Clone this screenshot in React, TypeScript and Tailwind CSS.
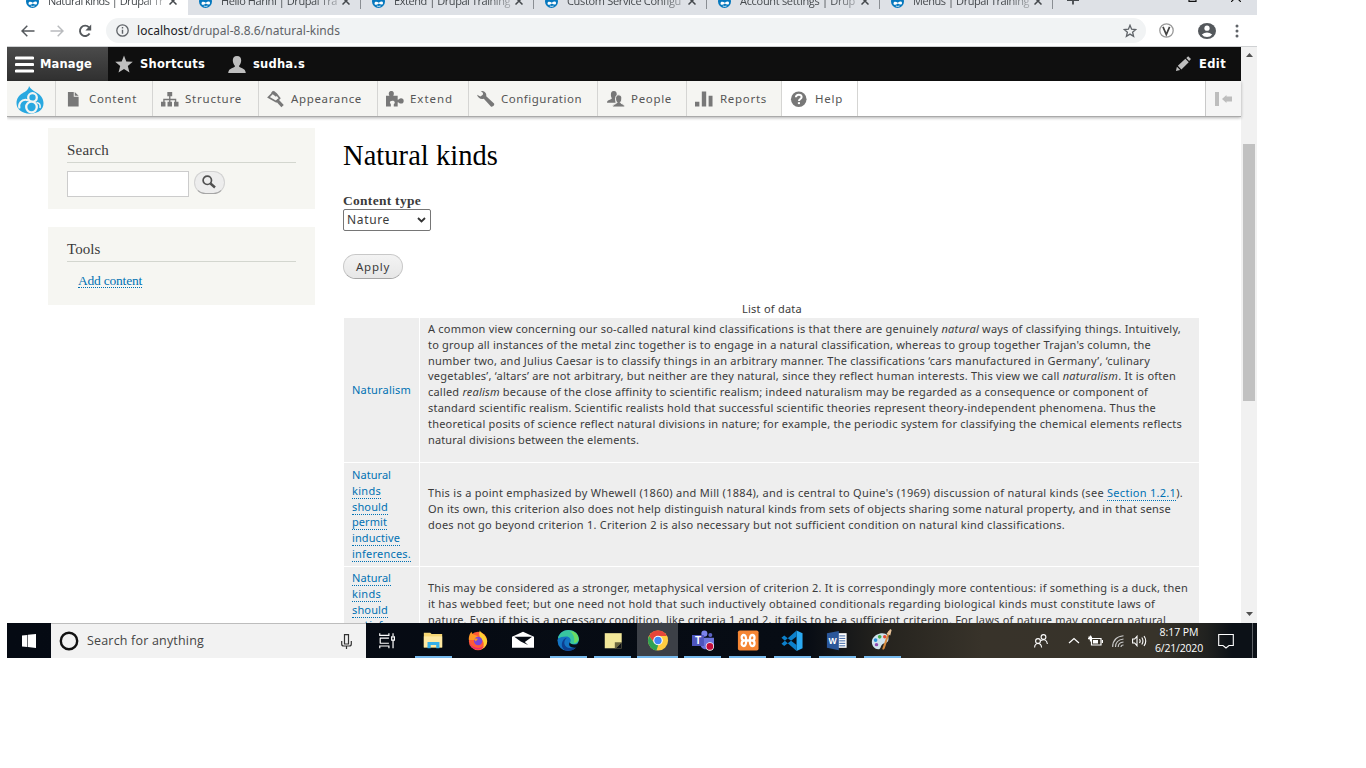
import { useLayoutEffect, useRef, type ReactNode } from "react";

/* Inline text tracked so that it occupies exactly `w` pixels. */
function Fit({ w, className = "", children }: { w: number; className?: string; children: ReactNode }) {
  const ref = useRef<HTMLSpanElement>(null);
  useLayoutEffect(() => {
    const el = ref.current;
    if (!el) return;
    el.style.letterSpacing = "0px";
    const count = (el.textContent || "").length || 1;
    const natural = el.getBoundingClientRect().width;
    el.style.letterSpacing = `${(w - natural) / count}px`;
  }, [w]);
  return (
    <span ref={ref} className={`inline-block whitespace-nowrap ${className}`}>
      {children}
    </span>
  );
}

const Favicon = () => (
  <svg viewBox="0 0 13 15" className="h-[15px] w-[13px] shrink-0">
    <path d="M6.5 0C8 2 13 4 13 8.5A6.5 6.5 0 0 1 0 8.5C0 4 5 2 6.5 0Z" fill="#0678be" />
    <path d="M2.500 10.500C2.500 8 5 8.300 6.800 9.700 9 8 11 8 11 10c0 2-2 2-4.200.500C5 12 2.500 12.500 2.500 10.500z" fill="#fff" />
    <path d="M4.800 13q1.900.900 3.800 0" stroke="#fff" strokeWidth=".8" fill="none" />
  </svg>
);

const tabs = [
  { t: "Natural kinds | Drupal Tr", w: 115 },
  { t: "Hello Harini | Drupal Tra", w: 116 },
  { t: "Extend | Drupal Training", w: 116 },
  { t: "Custom Service Configu", w: 114 },
  { t: "Account settings | Drup", w: 115 },
  { t: "Menus | Drupal Training", w: 116 },
];

function TabStrip() {
  return (
    <div className="flex h-[15px] shrink-0 overflow-hidden bg-[#dee1e6] font-['Open_Sans',sans-serif] text-[11px] text-[#45494d]">
      {tabs.map((tab, i) => (
        <div
          key={tab.t}
          className={
            i === 0
              ? "flex h-[15px] w-[181px] shrink-0 items-start rounded-tl-none bg-white pl-[19px]"
              : "flex h-[9px] w-[173px] shrink-0 items-start border-r border-[#8a8e93] pl-[11px]"
          }
        >
          <span className="-mt-[8px] flex items-center">
            <Favicon />
            <span className="ml-[9px] mt-px w-[117px] overflow-hidden leading-[15px] [mask-image:linear-gradient(90deg,#000_80%,#0005)]">
              <Fit w={tab.w}>{tab.t}</Fit>
            </span>
            <svg viewBox="0 0 8 8" className="ml-[4px] mt-[1px] h-[8px] w-[8px]">
              <path d="M.5.5l7 7M7.5.5l-7 7" stroke="#45494d" strokeWidth="1.5" />
            </svg>
          </span>
        </div>
      ))}
      <svg viewBox="0 0 12 12" className="-mt-[7px] ml-[14px] h-[12px] w-[12px]">
        <path d="M6 0v11.5M0 7h12" stroke="#45494d" strokeWidth="1.8" />
      </svg>
      <svg viewBox="0 0 9 9" className="-mt-[7px] ml-[109px] h-[9px] w-[9px]">
        <path d="M1 0v8.3h7V0" fill="none" stroke="#111" strokeWidth="1.2" />
      </svg>
      <svg viewBox="0 0 10 10" className="-mt-[8px] ml-[34px] h-[10px] w-[10px]">
        <path d="M0 0l10 10M10 0L0 10" stroke="#111" strokeWidth="1.2" />
      </svg>
    </div>
  );
}

function AddressBar() {
  return (
    <div className="flex h-[32px] shrink-0 items-center border-b border-[#cfd1d3] bg-white">
      <svg viewBox="0 0 14 12" className="ml-[14px] h-[12px] w-[14px]">
        <path d="M13.5 6H1.2M6.3.8L1 6l5.3 5.2" fill="none" stroke="#54585c" strokeWidth="1.5" />
      </svg>
      <svg viewBox="0 0 14 12" className="ml-[15px] h-[12px] w-[14px]">
        <path d="M.5 6h12.3M7.7.8L13 6l-5.3 5.2" fill="none" stroke="#b9bbbe" strokeWidth="1.5" />
      </svg>
      <svg viewBox="0 0 14 14" className="ml-[14px] h-[14px] w-[14px]">
        <path d="M11.6 9.6A5.2 5.2 0 1 1 11 3.3" fill="none" stroke="#54585c" strokeWidth="1.9" />
        <path d="M13.2.6v5.8H7.4z" fill="#54585c" />
      </svg>
      <div className="ml-[14px] flex h-[25px] w-[1040px] items-center rounded-full bg-[#f1f3f4] pl-[10px]">
        <svg viewBox="0 0 13 13" className="h-[13px] w-[13px]">
          <circle cx="6.5" cy="6.5" r="5.7" fill="none" stroke="#5f6368" strokeWidth="1.3" />
          <path d="M6.5 5.8v4M6.5 3v1.5" stroke="#5f6368" strokeWidth="1.4" />
        </svg>
        <span className="ml-[8px] font-['Noto_Sans',sans-serif] text-[12px] leading-[16px] text-[#5f6368]">
          <Fit w={203}>
            <span className="text-[#202124]">localhost</span>/drupal-8.8.6/natural-kinds
          </Fit>
        </span>
        <svg viewBox="0 0 14 14" className="ml-auto mr-[9px] h-[14px] w-[14px]">
          <path d="M7 1.3l1.6 3.9 4.2.3-3.2 2.7 1 4.1L7 10.1l-3.6 2.2 1-4.1L1.2 5.5l4.2-.3z" fill="none" stroke="#5f6368" strokeWidth="1.3" />
        </svg>
      </div>
      <svg viewBox="0 0 15 15" className="ml-[13px] h-[15px] w-[15px]">
        <circle cx="7.5" cy="7.5" r="6.7" fill="#fff" stroke="#999" strokeWidth="1.3" />
        <path d="M4 3.8l3.3 7.7L10.6 3.8" fill="none" stroke="#444" strokeWidth="1.7" />
      </svg>
      <svg viewBox="0 0 18 16" className="ml-[24px] h-[16px] w-[18px]">
        <ellipse cx="9" cy="8" rx="9" ry="8" fill="#54585c" />
        <circle cx="9" cy="5.2" r="2.6" fill="#fff" />
        <path d="M3.8 11.4Q9 7.4 14.2 11.4 12.4 14 9 14T3.8 11.4z" fill="#fff" />
      </svg>
      <svg viewBox="0 0 4 14" className="ml-[19px] h-[14px] w-[4px]">
        <circle cx="2" cy="2" r="1.5" fill="#5f6368" />
        <circle cx="2" cy="7" r="1.5" fill="#5f6368" />
        <circle cx="2" cy="12" r="1.5" fill="#5f6368" />
      </svg>
    </div>
  );
}

function AdminBar() {
  return (
    <div className="flex h-[34px] shrink-0 items-center bg-[#0f0f0f] font-['DejaVu_Sans',sans-serif] text-[11.500px] font-bold text-white">
      <div className="flex h-full w-[101px] items-center bg-linear-to-b from-[#4b4b4b] to-[#303030] pl-[8px]">
        <svg viewBox="0 0 19 17" className="h-[17px] w-[19px]">
          <path d="M1.3 2h16.4M1.3 8.5h16.4M1.3 15h16.4" stroke="#fff" strokeWidth="3" strokeLinecap="round" />
        </svg>
        <Fit w={52} className="ml-[6px] mt-px">Manage</Fit>
      </div>
      <svg viewBox="0 0 18 17" className="ml-[7px] h-[18px] w-[18px]">
        <path d="M9 0l2.3 5.9 6.5.4-5 4.2 1.7 6.5L9 13.4 3.5 17l1.7-6.5-5-4.2 6.5-.4z" fill="#bebebe" />
      </svg>
      <Fit w={65} className="ml-[7px] mt-px">Shortcuts</Fit>
      <svg viewBox="0 0 18 17" className="ml-[23px] h-[17px] w-[18px]">
        <path d="M9 0c3 0 4.3 1.900 4.200 4.600-.1 2.500-1.200 4.600-2.200 5.400 0 2 6.500 1.500 6.800 7H.2c.3-5.500 6.800-5 6.800-7-1-.8-2.100-2.900-2.200-5.400C4.700 1.900 6 0 9 0z" fill="#bebebe" />
      </svg>
      <Fit w={52} className="ml-[7px] mt-px">sudha.s</Fit>
      <svg viewBox="0 0 17 17" className="ml-auto h-[16px] w-[16px]">
        <path d="M1 16l1-4.500 3.500 3.500zM3 10.300L11 3l3.600 3.600L6.800 14.300zM12 2l2-1.800 3 3-2 2z" fill="#bebebe" />
      </svg>
      <Fit w={27} className="ml-[8px] mr-[15px] mt-px">Edit</Fit>
    </div>
  );
}

const g = "#787878";
const menu = [
  { label: "Content", cell: "w-[97px] pl-[9px]", tw: 48, gap: "ml-[6px]", icon: <path d="M3 2h6v5h5v10H3zM10 2l4 4h-4z" fill={g} /> },
  {
    label: "Structure", cell: "w-[106px] pl-[8px]", tw: 57, gap: "ml-[6px]",
    icon: <path d="M6.500 2h5v4.500h-1.800V9h6v3.200H18V17h-4.600v-4.800h.9v-1.700H9.700v1.700h1.600V17H6.700v-4.800h1.600v-1.700H3.700v1.700h.9V17H0v-4.800h2.300V9h6V6.500H6.500z" fill={g} />,
  },
  {
    label: "Appearance", cell: "w-[119px] pl-[8px]", tw: 71, gap: "ml-[6px]",
    icon: (
      <g fill="none" stroke={g}>
        <path d="M1.500 7.500L7 2l2.500 2 3.500 4.500-3.500 3.500z" strokeWidth="1.700" />
        <path d="M5 2l5 4" strokeWidth="2.500" />
        <path d="M10 10l6 6.500" strokeWidth="3.300" />
      </g>
    ),
  },
  {
    label: "Extend", cell: "w-[91px] pl-[8px]", tw: 43, gap: "ml-[6px]",
    icon: <path d="M0 6h3.500C2 3 3.500 1 5.500 1s3.500 2 2 5H12v4c1.500 0 1.500-1.500 3.500-1.500 1.700 0 2.700 1.200 2.700 2.700s-1 2.800-2.700 2.800c-2 0-2-1.500-3.500-1.500V17H8v-2c0-1 1-1 1-2.200S8 11 6.500 11 4 11.800 4 12.800 5 14 5 15v2H0z" fill={g} />,
  },
  {
    label: "Configuration", cell: "w-[129px] pl-[8px]", tw: 81, gap: "ml-[6px]",
    icon: <path d="M4 1c4 0 6 2 5.500 5.500l8 7.500c1 1.500-1.500 4-3.200 3L7 9C4 10 1 8.500 0 5l3.500 1.800L6 5 6.200 3z" fill={g} />,
  },
  {
    label: "People", cell: "w-[89px] pl-[9px]", tw: 41, gap: "ml-[6px]",
    icon: (
      <g>
        <path d="M7 1c2.300 0 3.200 1.600 3 4-.1 1.800-.8 3-1.500 3.700l.3 4.300H0c.2-3.500 4.500-2.500 5-4.500C4.300 7.600 4 6.500 4 5c0-2.400.7-4 3-4z" fill={g} />
        <path d="M12 5c2.400 0 3.400 1.700 3.200 4.200-.1 1.800-.7 2.800-1.500 3.500 0 1.800 4.600 1.400 4.800 4.800h-13c.2-3.400 4.800-3 4.800-4.800-.8-.7-1.400-1.700-1.500-3.500C8.700 6.700 9.600 5 12 5z" fill={g} stroke="#f5f5f2" strokeWidth="1" />
      </g>
    ),
  },
  { label: "Reports", cell: "w-[95px] pl-[8px]", tw: 47, gap: "ml-[7px]", icon: <path d="M0 12h4.500v5H0zM7 1.500h4.500V17H7zM14 6h4v11h-4z" fill={g} /> },
  {
    label: "Help", cell: "w-[76px] bg-white pl-[8px]", tw: 28, gap: "ml-[7px]",
    icon: (
      <g>
        <circle cx="9" cy="9.500" r="8" fill={g} />
        <path d="M6 7.500q.2-2.700 3-2.700t3 2.400c0 2-2.800 2-2.800 4" fill="none" stroke="#fff" strokeWidth="2" />
        <path d="M9.200 12.500v2" stroke="#fff" strokeWidth="2.200" />
      </g>
    ),
  },
];

const DrupalLogo = () => (
  <svg viewBox="0 0 28 28" className="h-[28px] w-[28px]">
    <path d="M13 0c1.500 3 4 4.500 7 6.200 4.500 2.600 7.500 6 7.500 11 0 6-5 10.300-13.500 10.500C5.500 27.500.5 23 .5 17.200.5 12.500 3 9.500 6.500 7.300 9.500 5.300 12.500 4 13 0z" fill="#29a8e0" />
    <circle cx="16.500" cy="11.500" r="4.300" fill="none" stroke="#f5f5f2" strokeWidth="2.300" />
    <path d="M12 14.200C5 12.500 2 18 3.500 22.500" fill="none" stroke="#f5f5f2" strokeWidth="2" />
    <circle cx="15.500" cy="21" r="5.300" fill="#29a8e0" stroke="#f5f5f2" strokeWidth="2.300" />
    <path d="M20.500 16.500Q25 17 24 22" fill="none" stroke="#f5f5f2" strokeWidth="1.500" />
  </svg>
);

function AdminTray() {
  return (
    <div className="relative z-10 flex h-[36px] shrink-0 border-b border-[#aaa] bg-white font-['Noto_Sans',sans-serif] text-[11.500px] text-[#565656] shadow-[0_1px_3px_rgba(0,0,0,.3)]">
      <div className="flex w-[49px] items-center border-r border-[#d5d5d3] bg-[#f5f5f2] pl-[9px] pt-[2px]">
        <DrupalLogo />
      </div>
      {menu.map((m) => (
        <div key={m.label} className={`flex items-center border-r border-[#d5d5d3] ${m.label === "Help" ? "" : "bg-[#f5f5f2]"} ${m.cell}`}>
          <svg viewBox="0 0 18.500 18.500" className="h-[18px] w-[18px]">{m.icon}</svg>
          <Fit w={m.tw} className={m.gap}>{m.label}</Fit>
        </div>
      ))}
      <div className="ml-auto flex w-[36px] items-center border-l border-[#c9c9c9] bg-[#f5f5f5] pl-[9px]">
        <svg viewBox="0 0 18 14" className="h-[14px] w-[18px]">
          <path d="M0 0h4v14H0zM7 7l4.500-4v1.500H17v5h-5.500V11z" fill="#bdbdbd" />
        </svg>
      </div>
    </div>
  );
}

const linkCls = "border-b border-dotted border-[#0071b3] text-[#0071b3]";

function Sidebar() {
  return (
    <aside className="mt-[11px] flex w-[267px] flex-col gap-[18px] font-['Liberation_Serif',serif] text-[#3b3b3b]">
      <section className="h-[81px] bg-[#f6f6f2] px-[19px] pt-[11px]">
        <h2 className="h-[24px] border-b border-[#d3d6cf] text-[15px] leading-[22px]">
          <Fit w={42}>Search</Fit>
        </h2>
        <div className="mt-[8px] flex">
          <div className="h-[26px] w-[122px] border border-[#ccc] bg-white" />
          <div className="ml-[5px] flex h-[23px] w-[31px] items-center justify-center rounded-full border border-[#d2d2d2] border-b-[#a6a6a6] bg-[#ededed]">
            <svg viewBox="0 0 14 14" className="-ml-[2px] -mt-px h-[14px] w-[14px]">
              <circle cx="5.300" cy="5.300" r="4.200" fill="none" stroke="#505050" strokeWidth="1.700" />
              <path d="M8.500 8.500l4.500 4" stroke="#505050" strokeWidth="2.400" />
            </svg>
          </div>
        </div>
      </section>
      <section className="h-[78px] bg-[#f6f6f2] px-[19px] pt-[11px]">
        <h2 className="h-[24px] border-b border-[#d3d6cf] text-[15px] leading-[22px]">
          <Fit w={33.5}>Tools</Fit>
        </h2>
        <div className="mt-[11px] flex pl-[11px] text-[13.500px]">
          <Fit w={64} className={`h-[15px] leading-[15px] ${linkCls}`}>Add content</Fit>
        </div>
      </section>
    </aside>
  );
}

const row1 = [
  { w: 753, t: <>A common view concerning our so-called natural kind classifications is that there are genuinely <em>natural</em> ways of classifying things. Intuitively,</> },
  { w: 723, t: <>to group all instances of the metal zinc together is to engage in a natural classification, whereas to group together Trajan's column, the</> },
  { w: 722, t: <>number two, and Julius Caesar is to classify things in an arbitrary manner. The classifications ‘cars manufactured in Germany’, ‘culinary</> },
  { w: 748, t: <>vegetables’, ‘altars’ are not arbitrary, but neither are they natural, since they reflect human interests. This view we call <em>naturalism</em>. It is often</> },
  { w: 720, t: <>called <em>realism</em> because of the close affinity to scientific realism; indeed naturalism may be regarded as a consequence or component of</> },
  { w: 728, t: <>standard scientific realism. Scientific realists hold that successful scientific theories represent theory-independent phenomena. Thus the</> },
  { w: 754, t: <>theoretical posits of science reflect natural divisions in nature; for example, the periodic system for classifying the chemical elements reflects</> },
  { w: 211, t: <>natural divisions between the elements.</> },
];
const row2 = [
  { w: 755, t: <>This is a point emphasized by Whewell (1860) and Mill (1884), and is central to Quine's (1969) discussion of natural kinds (see <span className={`inline-block h-[16px] ${linkCls}`}>Section 1.2.1</span>).</> },
  { w: 743, t: <>On its own, this criterion also does not help distinguish natural kinds from sets of objects sharing some natural property, and in that sense</> },
  { w: 637, t: <>does not go beyond criterion 1. Criterion 2 is also necessary but not sufficient condition on natural kind classifications.</> },
];
const row3 = [
  { w: 760, t: <>This may be considered as a stronger, metaphysical version of criterion 2. It is correspondingly more contentious: if something is a duck, then</> },
  { w: 727, t: <>it has webbed feet; but one need not hold that such inductively obtained conditionals regarding biological kinds must constitute laws of</> },
  { w: 738, t: <>nature. Even if this is a necessary condition, like criteria 1 and 2, it fails to be a sufficient criterion. For laws of nature may concern natural</> },
];
const names2 = [["Natural", 39], ["kinds", 29], ["should", 36], ["permit", 35], ["inductive", 48], ["inferences.", 59]] as const;
const names3 = [["Natural", 39], ["kinds", 29], ["should", 36], ["satisfy", 37]] as const;

function Lines({ rows }: { rows: { w: number; t: ReactNode }[] }) {
  return (
    <>
      {rows.map((r) => (
        <div key={r.w} className="h-[15.8px]">
          <Fit w={r.w}>{r.t}</Fit>
        </div>
      ))}
    </>
  );
}

function MainContent() {
  return (
    <main className="ml-[28px] w-[857px] text-[#3b3b3b]">
      <h1 className="mt-[24px] font-['Liberation_Serif',serif] text-[28.500px] leading-[30px] text-black">
        <Fit w={155}>Natural kinds</Fit>
      </h1>
      <div className="mt-[22px] h-[16px] font-['Liberation_Serif',serif] text-[13.500px] font-bold leading-[16px]">
        <Fit w={78}>Content type</Fit>
      </div>
      <div className="flex h-[22px] w-[88px] items-center rounded-[2px] border border-[#767676] bg-white pl-[3px] pr-[4px] font-['Noto_Sans',sans-serif] text-[12px]">
        <Fit w={43}>Nature</Fit>
        <svg viewBox="0 0 9 6" className="ml-auto h-[6px] w-[9px]">
          <path d="M1 1l3.500 3.500L8 1" fill="none" stroke="#333" strokeWidth="1.800" />
        </svg>
      </div>
      <div className="mt-[23px] flex h-[25px] w-[60px] items-center justify-center rounded-full border border-[#c8c8c8] border-b-[#a6a6a6] bg-linear-to-b from-[#f3f3f3] to-[#e7e7e7] font-['Noto_Sans',sans-serif] text-[11.500px]">
        <Fit w={34}>Apply</Fit>
      </div>
      <div className="mt-[22px] font-['Noto_Sans',sans-serif] text-[11px] leading-[15.800px]">
        <div className="h-[17px] pl-px text-center"><Fit w={60}>List of data</Fit></div>
        <div className="ml-px grid grid-cols-[75px_779px] gap-px">
          <div className="flex h-[144px] items-center bg-[#eee] pl-[8px] text-[#0071b3]">
            <Fit w={59}>Naturalism</Fit>
          </div>
          <div className="bg-[#eee] pl-[8px] pt-[3px]"><Lines rows={row1} /></div>
          <div className="h-[103px] bg-[#eee] pl-[8px] pt-[4px]">
            {names2.map(([n, w], i) => (
              <div key={n} className="h-[15.800px]">
                <Fit w={w} className={i === 0 ? "text-[#0071b3]" : `h-[16px] ${linkCls}`}>{n}</Fit>
              </div>
            ))}
          </div>
          <div className="bg-[#eee] pl-[8px] pt-[22px]"><Lines rows={row2} /></div>
          <div className="h-[80px] bg-[#eee] pl-[8px] pt-[3px]">
            {names3.map(([n, w]) => (
              <div key={n} className="h-[15.800px]">
                <Fit w={w} className={`h-[16px] ${linkCls}`}>{n}</Fit>
              </div>
            ))}
          </div>
          <div className="bg-[#eee] pl-[8px] pt-[13px]"><Lines rows={row3} /></div>
        </div>
      </div>
    </main>
  );
}

const apps: { id: string; bar?: boolean; active?: boolean; art: ReactNode }[] = [
  {
    id: "timeline",
    art: <path d="M3 4.500v2.500h10V4.500M3 21v-2.500h10V21M3 10h10M3 15.500h10M3.500 10v5.500M17.500 4.500v3M17.500 12.500V21M16 8.500h3v3.500h-3z" fill="none" stroke="#fff" strokeWidth="1.300" />,
  },
  {
    id: "explorer", bar: true,
    art: (
      <g>
        <path d="M2 4h7l1.500 1.500H22V20H2z" fill="#f7d774" />
        <path d="M2 8h20v12H2z" fill="#ffe9a2" />
        <path d="M6 21v-7h13v7h-3.500v-3.500h-6V21z" fill="#37b0e8" />
      </g>
    ),
  },
  {
    id: "firefox",
    art: (
      <g>
        <circle cx="12" cy="13" r="10" fill="#ff5a36" />
        <path d="M14 1.500c1 3 7.500 5 8 11.500 0 3-2 7.500-6 9 3-3 3-7.500 0-10.500-2-2-3.500-6-2-10z" fill="#ffcf33" />
        <path d="M2 12C1.700 8 3.500 4 5 3c0 2 1.500 3 3.500 3.500 1.500.500 3 1 4 2.500L9 12z" fill="#ff9824" />
        <circle cx="12.200" cy="13" r="4.600" fill="#7b45d8" />
        <path d="M2.500 14.500c3 7 12 7.500 16 4-2.500 5-13.500 6-16-4z" fill="#ec2a71" />
        <path d="M7 10l5 .5-2.500 3z" fill="#ff9824" />
      </g>
    ),
  },
  { id: "mail", art: <g><path d="M0 8.500L12 3l12 5.500V20.500H0z" fill="#fff" /><path d="M2.500 8.500H22l-8 5.500 3.500 3.500-8-4z" fill="#070c15" /></g> },
  {
    id: "edge", bar: true,
    art: (
      <g>
        <circle cx="12" cy="12.500" r="11.500" fill="#1474c4" />
        <path d="M1 10C2.500 4 7.500 1 12.500 1 19.500 1 24 6 24 11c0 4-4 5.500-6.500 5.500-3 0-4-1.200-3-2.500 1.500-3-1-6-4.500-6C6.500 8 3 9 1 10z" fill="#38c6a0" />
        <path d="M14 2q9 1 9.500 9-1 4-5 4 2-8-4.500-13z" fill="#6bdc62" />
        <path d="M8 15c0 4.500 5 8 13 4.500-3 4-8 5-12.500 3.500C3 20 5 10 11 9.500 9 11 8 13 8 15z" fill="#0d3f90" />
        <path d="M14 14.500q.500 3 7.500 2l2.500-2v3.500l-2.500 2c-6 1.500-10-2-7.500-5.500z" fill="#080d17" />
      </g>
    ),
  },
  { id: "notes", bar: true, art: <g><path d="M3 4.500h18.500v16.500H3z" fill="#f2e79a" /><path d="M14 14.500h7.500L15 21h-1z" fill="#6d683f" /><path d="M21.500 14.500V21H15z" fill="#101319" /></g> },
  {
    id: "chrome", bar: true, active: true,
    art: (
      <g>
        <circle cx="12" cy="12.500" r="11" fill="#ffcd41" />
        <path d="M2.300 7.500A11 11 0 0 1 21.700 7.500H12L8 15z" fill="#e6453a" />
        <path d="M2.300 7.500l5.500 7.500 4.500 2.500-2 5.900A11 11 0 0 1 2.300 7.500z" fill="#2fa253" />
        <circle cx="12" cy="12.500" r="5.200" fill="#fff" />
        <circle cx="12" cy="12.500" r="4" fill="#4285f4" />
      </g>
    ),
  },
  {
    id: "teams", bar: true,
    art: (
      <g>
        <circle cx="13.500" cy="5" r="3.300" fill="#7b83eb" />
        <circle cx="20" cy="6.500" r="2.200" fill="#5b62c4" />
        <path d="M9 9.500h15v8c-2 4-5 5-9 4.500-4 0-6-3-6-6z" fill="#6c74dc" />
        <path d="M0 6.500h13v12H0z" fill="#4e55bd" />
        <text x="3.200" y="16.500" fontSize="11" fontWeight="bold" fontFamily="Liberation Sans" fill="#fff">T</text>
        <circle cx="19.500" cy="19" r="4.600" fill="#fff" />
        <circle cx="19.500" cy="19" r="3.700" fill="#c50f3c" />
      </g>
    ),
  },
  {
    id: "xampp", bar: true,
    art: (
      <g>
        <rect x="1" y="1.500" width="22.500" height="22" rx="2" fill="#f58634" />
        <path d="M7.500 6.500C4 6.500 4.500 12.500 8 12.500h8.500c3.500 0 3.500-6 0-6-2 0-2.500 1.500-2.500 6 0 4.500.500 6 2.500 6 3.500 0 3.500-6 0-6H8c-3.500 0-4 6-.500 6 2 0 2.500-1.500 2.500-6 0-4.500-.500-6-2.500-6z" fill="none" stroke="#fff" strokeWidth="2.500" />
      </g>
    ),
  },
  {
    id: "code", bar: true,
    art: (
      <g>
        <path d="M17 1.500l6.500 3v16.500L17 24z" fill="#2aa9f2" />
        <path d="M17 1.500V8L3.500 18.500.5 16zM17 24v-6.500L3.500 7 .5 9.500z" fill="#0c80cb" />
      </g>
    ),
  },
  {
    id: "word", bar: true,
    art: (
      <g>
        <path d="M13 4.500h9.500v16H13z" fill="#fff" />
        <path d="M14.500 7.500h6.500M14.500 10.200h6.500M14.500 12.900h6.500M14.500 15.600h6.500M14.500 18.300h6.500" stroke="#2b579a" />
        <path d="M1 4.500L14 2v21L1 20.500z" fill="#2b579a" />
        <text x="2.800" y="16" fontSize="9.500" fontWeight="bold" fontFamily="Liberation Sans" fill="#fff">W</text>
      </g>
    ),
  },
  {
    id: "paint", bar: true,
    art: (
      <g>
        <path d="M9 5c7-2 11 2 10 7-1 4-5 3-7 5s-1 5-4 5c-5 0-7.500-5-7-9 .5-4 4-7 8-8z" fill="#cfe3ee" />
        <circle cx="5" cy="12" r="2" fill="#2b8fd6" />
        <circle cx="9.500" cy="8.500" r="2" fill="#45ae4c" />
        <circle cx="15" cy="8.500" r="1.900" fill="#e44a36" />
        <circle cx="6" cy="17" r="1.900" fill="#8e4cb1" />
        <path d="M19 2l2 .500-6 18.500c-1 2-3 2-2.500 0z" fill="#d58a3e" />
        <path d="M17 5l4-5 1.500 1-1.500 6z" fill="#e8c49a" />
      </g>
    ),
  },
];

function Taskbar() {
  return (
    <footer className="flex h-[35px] shrink-0 bg-[linear-gradient(90deg,#050a13_0%,#070c14_64%,#25231e_70%,#38332a_78%,#37332a_92%,#20211f_96%,#0c1117_98%)] text-white">
      <div className="flex w-[44px] items-center justify-center">
        <svg viewBox="0 0 14 14" className="h-[14px] w-[14px]">
          <path d="M0 1.500L5.300.900v12.200L0 12.500zM5.900.800L14 0v14l-8.100-.900z" fill="#fff" />
        </svg>
      </div>
      <div className="flex w-[315px] items-center border-t border-[#bdbdbd] bg-[#f2f2f2] pl-[8px] pr-[14px]">
        <svg viewBox="0 0 20 20" className="h-[20px] w-[20px]">
          <circle cx="10" cy="10" r="8.200" fill="none" stroke="#111" strokeWidth="2.400" />
        </svg>
        <span className="ml-[8px] mt-px font-['Open_Sans',sans-serif] text-[12.500px] text-[#444]"><Fit w={117}>Search for anything</Fit></span>
        <svg viewBox="0 0 11 15" className="ml-auto h-[15px] w-[11px]">
          <path d="M3.500.700h4v9.300h-4zM.700 7v3q0 2 2 2h5.600q2 0 2-2V7M5.500 12v3" fill="none" stroke="#333" strokeWidth="1.200" />
        </svg>
      </div>
      {apps.map((a) => (
        <div key={a.id} className="flex w-[44.900px] flex-col items-center">
          <div className={a.active ? "flex h-[33px] w-[41px] items-center justify-center bg-[#3c4047]" : "flex h-[33px] w-[41px] items-center justify-center"}>
            <svg viewBox="0 0 24 25" className="mt-px h-[23px] w-[22px]">{a.art}</svg>
          </div>
          {a.bar && <div className={a.active ? "h-[2px] w-[41px] bg-[#76b9ed]" : "h-[2px] w-[37px] bg-[#76b9ed]"} />}
        </div>
      ))}
      <div className="ml-auto flex items-center">
        <svg viewBox="0 0 14 14" className="h-[14px] w-[14px]" fill="none" stroke="#fff" strokeWidth="1.100">
          <circle cx="9.500" cy="3" r="2.400" />
          <circle cx="4" cy="7" r="2.400" />
          <path d="M.600 13.500q.200-4 3.400-4t3.600 4M6.800 6.500q5.700-2.500 6.600 3.500" />
        </svg>
        <svg viewBox="0 0 12 7" className="ml-[20px] h-[7px] w-[12px]"><path d="M1 6l5-4.500L11 6" fill="none" stroke="#fff" strokeWidth="1.200" /></svg>
        <svg viewBox="0 0 15 11" className="ml-[8px] h-[11px] w-[15px]">
          <path d="M3.500 3.500H13V10H3.500zM14.500 5v3M0 3.500h4M2.500.500v6" fill="none" stroke="#fff" strokeWidth="1.200" />
          <path d="M.500 1.500h3.500v3H.500zM5 5h5v3.500H5z" fill="#fff" />
        </svg>
        <svg viewBox="0 0 12 12" className="ml-[9px] h-[12px] w-[12px]" fill="none" stroke="#ccc" strokeWidth="1.100">
          <path d="M.700 12Q.700 2 11.500.800M3.500 12Q3.500 5 11.500 4M6.200 12q0-4.500 5.300-5M9 12q0-2 2.500-2" />
        </svg>
        <svg viewBox="0 0 15 12" className="ml-[8px] h-[12px] w-[15px]" fill="none" stroke="#fff" strokeWidth="1.100">
          <path d="M.600 4h2L5 1.300v9.400L2.600 8h-2zM7.500 4q1.300 2 0 4M9.800 2.500q2.300 3.500 0 7M12 1q3.500 5 0 10" />
        </svg>
        <div className="-mt-[2px] ml-[7px] flex w-[50px] flex-col items-center font-['Open_Sans',sans-serif] text-[10.500px] leading-[16px]">
          <Fit w={39}>8:17 PM</Fit>
          <Fit w={48}>6/21/2020</Fit>
        </div>
        <svg viewBox="0 0 16 16" className="ml-[14px] mr-[18px] h-[16px] w-[16px]">
          <path d="M.700 1.500h14.600v11H11L8 15l-3-2.500H.700z" fill="none" stroke="#fff" strokeWidth="1.100" />
        </svg>
        <div className="mr-[4px] h-[35px] w-px bg-[#5d6166]" />
      </div>
    </footer>
  );
}

export default function App() {
  return (
    <div className="h-[768px] w-[1366px] overflow-hidden bg-white">
      <div className="ml-[7px] flex h-[658px] w-[1250px] flex-col overflow-hidden">
        <TabStrip />
        <AddressBar />
        <div className="flex h-[576px] shrink-0 overflow-hidden">
          <div className="flex w-[1234px] flex-col">
            <AdminBar />
            <AdminTray />
            <div className="flex min-h-0 flex-1 items-start overflow-hidden pl-[41px]">
              <Sidebar />
              <MainContent />
            </div>
          </div>
          <div className="flex w-[16px] flex-col items-center bg-[#f1f1f1]">
            <svg viewBox="0 0 7 4" className="mt-[6px] h-[4px] w-[7px]"><path d="M0 4L3.500 0 7 4z" fill="#505050" /></svg>
            <div className="mt-[87px] h-[257px] w-[12px] bg-[#c1c1c1]" />
            <svg viewBox="0 0 7 4" className="mb-[7px] mt-auto h-[4px] w-[7px]"><path d="M0 0l3.500 4L7 0z" fill="#505050" /></svg>
          </div>
        </div>
        <Taskbar />
      </div>
    </div>
  );
}
